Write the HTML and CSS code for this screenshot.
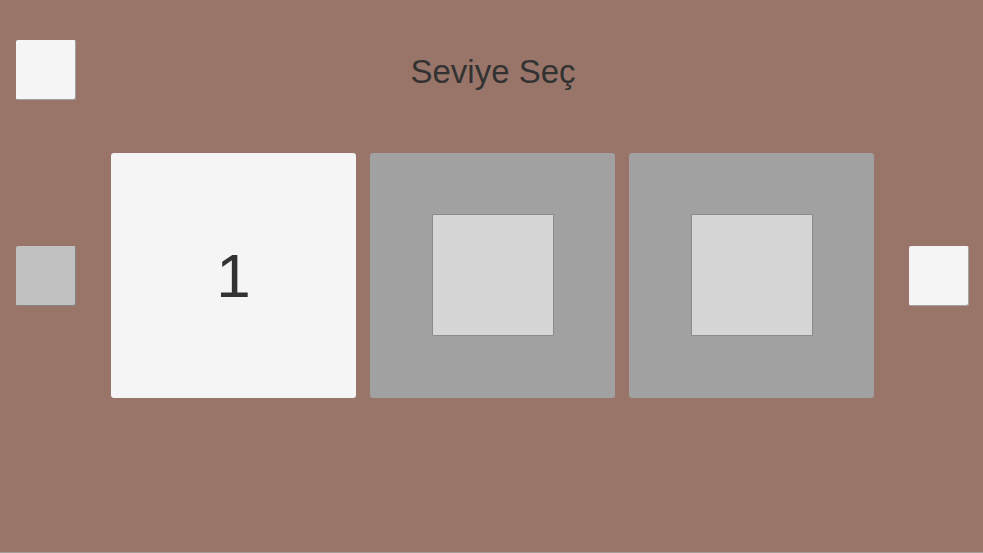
FILE: index.html
```
<!DOCTYPE html>
<html lang="tr">
<head>
<meta charset="utf-8">
<title>Seviye Seç</title>
<link rel="stylesheet" href="styles.css">
</head>
<body>
<div class="screen">
  <header class="header">
    <button class="btn btn-light back" aria-label="Geri"></button>
    <h1 class="title">Seviye Seç</h1>
    <div></div>
  </header>
  <main class="row">
    <button class="btn btn-dim" aria-label="Önceki"></button>
    <div class="cards">
      <div class="card card-open"><span class="num">1</span></div>
      <div class="card card-locked"><div class="lock"></div></div>
      <div class="card card-locked"><div class="lock"></div></div>
    </div>
    <button class="btn btn-light" aria-label="Sonraki"></button>
  </main>
</div>
</body>
</html>
```
FILE: styles.css
```
html, body {
  margin: 0;
  padding: 0;
  background: #a39c97;
}
body {
  font-family: "Liberation Sans", Arial, sans-serif;
  overflow: hidden;
}
.screen {
  height: 552px;
  background: #997569;
  display: flex;
  flex-direction: column;
}
.header {
  display: grid;
  grid-template-columns: 1fr auto 1fr;
  align-items: center;
  padding: 40px 0 0 0;
  height: 60px;
}
.back {
  margin-left: 16px;
}
.title {
  margin: 4px 0 0 3px;
  font-size: 33px;
  font-weight: normal;
  color: #323232;
  line-height: 38px;
}
.btn {
  width: 60px;
  height: 60px;
  padding: 0;
  border: none;
  border-radius: 2px;
  box-shadow: inset -1px -1px 0 rgba(60, 60, 60, 0.45);
  cursor: pointer;
}
.btn-light { background: #f5f5f5; }
.btn-dim { background: #c1c1c1; }
.row {
  display: flex;
  align-items: center;
  margin-top: 53px;
  padding-left: 16px;
  gap: 35px;
}
.cards {
  display: flex;
  gap: 14px;
}
.card {
  width: 245px;
  height: 245px;
  border-radius: 3px;
  display: flex;
  align-items: center;
  justify-content: center;
}
.card-open { background: #f5f5f5; }
.card-locked { background: #a1a1a1; }
.num {
  font-size: 62px;
  color: #323232;
  line-height: 1;
}
.lock {
  width: 120px;
  height: 120px;
  margin-top: -1px;
  background: #d6d6d6;
  border: 1px solid #8a8a8a;
  border-radius: 1px;
}
```
